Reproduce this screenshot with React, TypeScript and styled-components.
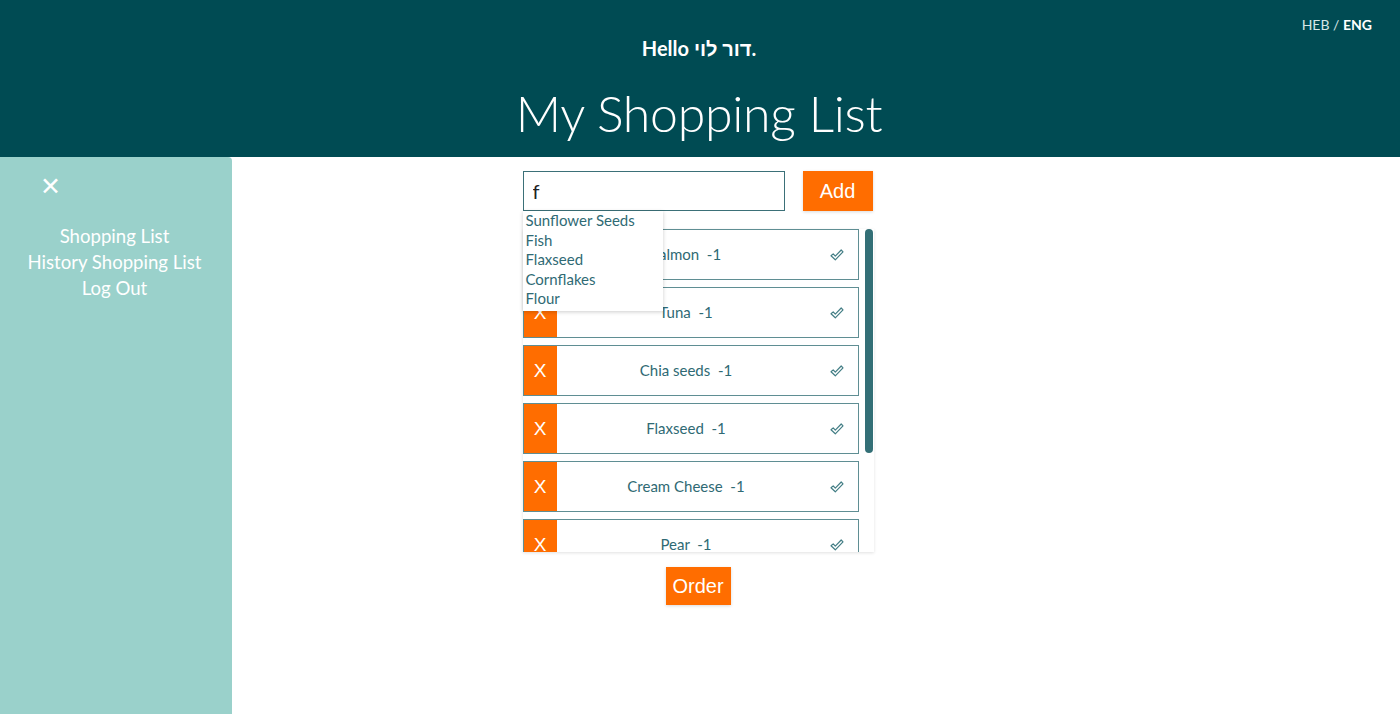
import React from 'react';
import styled, { createGlobalStyle } from 'styled-components';

const GlobalStyle = createGlobalStyle`
  html, body {
    margin: 0;
    padding: 0;
    height: 100%;
    background: #ffffff;
    font-family: Lato, "Noto Sans", sans-serif;
  }
  #root {
    height: 100%;
  }
`;

interface Item {
  name: string;
  amount: number;
}

const items: Item[] = [
  { name: 'Salmon', amount: 1 },
  { name: 'Tuna', amount: 1 },
  { name: 'Chia seeds', amount: 1 },
  { name: 'Flaxseed', amount: 1 },
  { name: 'Cream Cheese', amount: 1 },
  { name: 'Pear', amount: 1 },
  { name: 'Apple', amount: 1 },
  { name: 'Milk', amount: 1 },
];

const suggestions = ['Sunflower Seeds', 'Fish', 'Flaxseed', 'Cornflakes', 'Flour'];

const CheckIcon = () => (
  <svg width="14" height="12" viewBox="0 0 14 12">
    <path
      d="M1 6.8 L3.2 4.9 L5.3 7.1 L11.2 1 L13 2.8 L5.3 10.8 Z"
      fill="none"
      stroke="#437e85"
      strokeWidth="1.2"
      strokeLinejoin="round"
    />
  </svg>
);

const App: React.FC = () => {
  // the list shows about 323px of 8 rows, so the thumb covers that share of the track
  const visible = 323;
  const content = items.length * 51 + (items.length - 1) * 7;
  const thumb = Math.round((visible / content) * visible) - 4;

  return (
    <Page>
      <GlobalStyle />
      <Header>
        <Lang>
          HEB / <b>ENG</b>
        </Lang>
        <Hello>
          Hello <bdi>דור לוי</bdi>.
        </Hello>
        <Title>My Shopping List</Title>
      </Header>
      <Body>
        <Sidebar>
          <Close>✕</Close>
          <NavLink>Shopping List</NavLink>
          <NavLink>History Shopping List</NavLink>
          <NavLink>Log Out</NavLink>
        </Sidebar>
        <Main>
          <Column>
            <AddRow>
              <InputWrap>
                <Input defaultValue="f" />
                <Suggestions>
                  {suggestions.map(s => (
                    <Suggestion key={s}>{s}</Suggestion>
                  ))}
                </Suggestions>
              </InputWrap>
              <OrangeButton>Add</OrangeButton>
            </AddRow>
            <ListFrame>
              <List>
                {items.map(item => (
                  <Row key={item.name}>
                    <RemoveBox>X</RemoveBox>
                    <ItemName>
                      {item.name}&nbsp; -{item.amount}
                    </ItemName>
                    <CheckBox>
                      <CheckIcon />
                    </CheckBox>
                  </Row>
                ))}
              </List>
              <Track>
                <Thumb style={{ height: thumb }} />
              </Track>
            </ListFrame>
            <OrderButton>Order</OrderButton>
          </Column>
        </Main>
      </Body>
    </Page>
  );
};

const Page = styled.div`
  display: flex;
  flex-direction: column;
  height: 714px;
  overflow: hidden;
`;

const Header = styled.header`
  position: relative;
  height: 157px;
  background: #004b53;
  display: flex;
  flex-direction: column;
  align-items: center;
  color: #ffffff;
  flex-shrink: 0;
  padding-right: 2px;
  box-sizing: border-box;
`;

const Lang = styled.div`
  position: absolute;
  top: 16px;
  right: 28px;
  font-size: 14px;
  color: #d6e6e7;
  b {
    color: #ffffff;
    font-weight: 700;
  }
`;

const Hello = styled.div`
  margin-top: 37px;
  font-size: 20px;
  font-weight: 700;
  line-height: 22px;
`;

const Title = styled.h1`
  margin: 25px 0 0;
  font-size: 50px;
  font-weight: 300;
  line-height: 58px;
  letter-spacing: -0.3px;
`;

const Body = styled.div`
  flex: 1;
  display: flex;
`;

const Sidebar = styled.nav`
  width: 232px;
  background: #9ad1cb;
  border-top-right-radius: 4px;
  display: flex;
  flex-direction: column;
  align-items: center;
  padding: 15px 3px 0 0;
  box-sizing: border-box;
  flex-shrink: 0;
`;

const Close = styled.div`
  align-self: flex-start;
  margin-left: 40px;
  font-size: 25px;
  line-height: 30px;
  color: #ffffff;
  font-family: "DejaVu Sans", sans-serif;
  font-weight: 700;
  margin-bottom: 21px;
`;

const NavLink = styled.a`
  font-size: 18.6px;
  line-height: 26px;
  color: #ffffff;
  font-weight: 400;
`;

const Main = styled.main`
  flex: 1;
  display: flex;
  justify-content: center;
  padding-right: 236px;
`;

const Column = styled.div`
  width: 351px;
  display: flex;
  flex-direction: column;
  align-items: center;
  padding-top: 14px;
`;

const AddRow = styled.div`
  width: 100%;
  display: flex;
  gap: 18px;
  margin-bottom: 18px;
`;

const InputWrap = styled.div`
  position: relative;
`;

const Input = styled.input`
  width: 262px;
  height: 40px;
  box-sizing: border-box;
  border: 1px solid #3b7078;
  padding: 0 9px;
  font-size: 20px;
  font-family: Lato, sans-serif;
  color: #222;
  outline: none;
`;

const Suggestions = styled.ul`
  position: absolute;
  top: 40px;
  left: 0;
  width: 140px;
  margin: 0;
  padding: 0 0 2px;
  list-style: none;
  background: #ffffff;
  box-shadow: 0 1px 4px rgba(0, 0, 0, 0.2);
  z-index: 5;
`;

const Suggestion = styled.li`
  padding-left: 3px;
  font-size: 15px;
  line-height: 19.6px;
  color: #2f6a74;
`;

const OrangeButton = styled.button`
  width: 70px;
  height: 40px;
  border: none;
  background: #ff6d00;
  color: #ffffff;
  font-family: "Liberation Sans", Arial, sans-serif;
  font-size: 20px;
  cursor: pointer;
  box-shadow: 0 1px 3px rgba(0, 0, 0, 0.15);
`;

const OrderButton = styled(OrangeButton)`
  width: 65px;
  height: 38px;
  margin-top: 15px;
`;

const ListFrame = styled.div`
  width: 100%;
  height: 323px;
  display: flex;
  box-shadow: 0 1px 3px rgba(0, 0, 0, 0.12);
`;

const List = styled.div`
  flex: 1;
  overflow: hidden;
  display: flex;
  flex-direction: column;
  gap: 7px;
`;

const Track = styled.div`
  width: 15px;
  padding: 0 1px 0 6px;
  box-sizing: border-box;
  flex-shrink: 0;
`;

const Thumb = styled.div`
  width: 8px;
  background: #336f76;
  border-radius: 5px;
`;

const Row = styled.div`
  flex-shrink: 0;
  display: flex;
  align-items: stretch;
  height: 51px;
  box-sizing: border-box;
  border: 1px solid #5f8e93;
`;

const RemoveBox = styled.div`
  width: 33px;
  background: #ff6d00;
  color: #ffffff;
  font-family: "Liberation Sans", Arial, sans-serif;
  font-size: 19px;
  display: flex;
  align-items: center;
  justify-content: center;
`;

const ItemName = styled.div`
  flex: 1;
  display: flex;
  align-items: center;
  justify-content: center;
  padding-bottom: 2px;
  font-size: 15px;
  color: #2f6a74;
  white-space: pre;
`;

const CheckBox = styled.div`
  width: 42px;
  display: flex;
  align-items: center;
  justify-content: center;
`;

export default App;
